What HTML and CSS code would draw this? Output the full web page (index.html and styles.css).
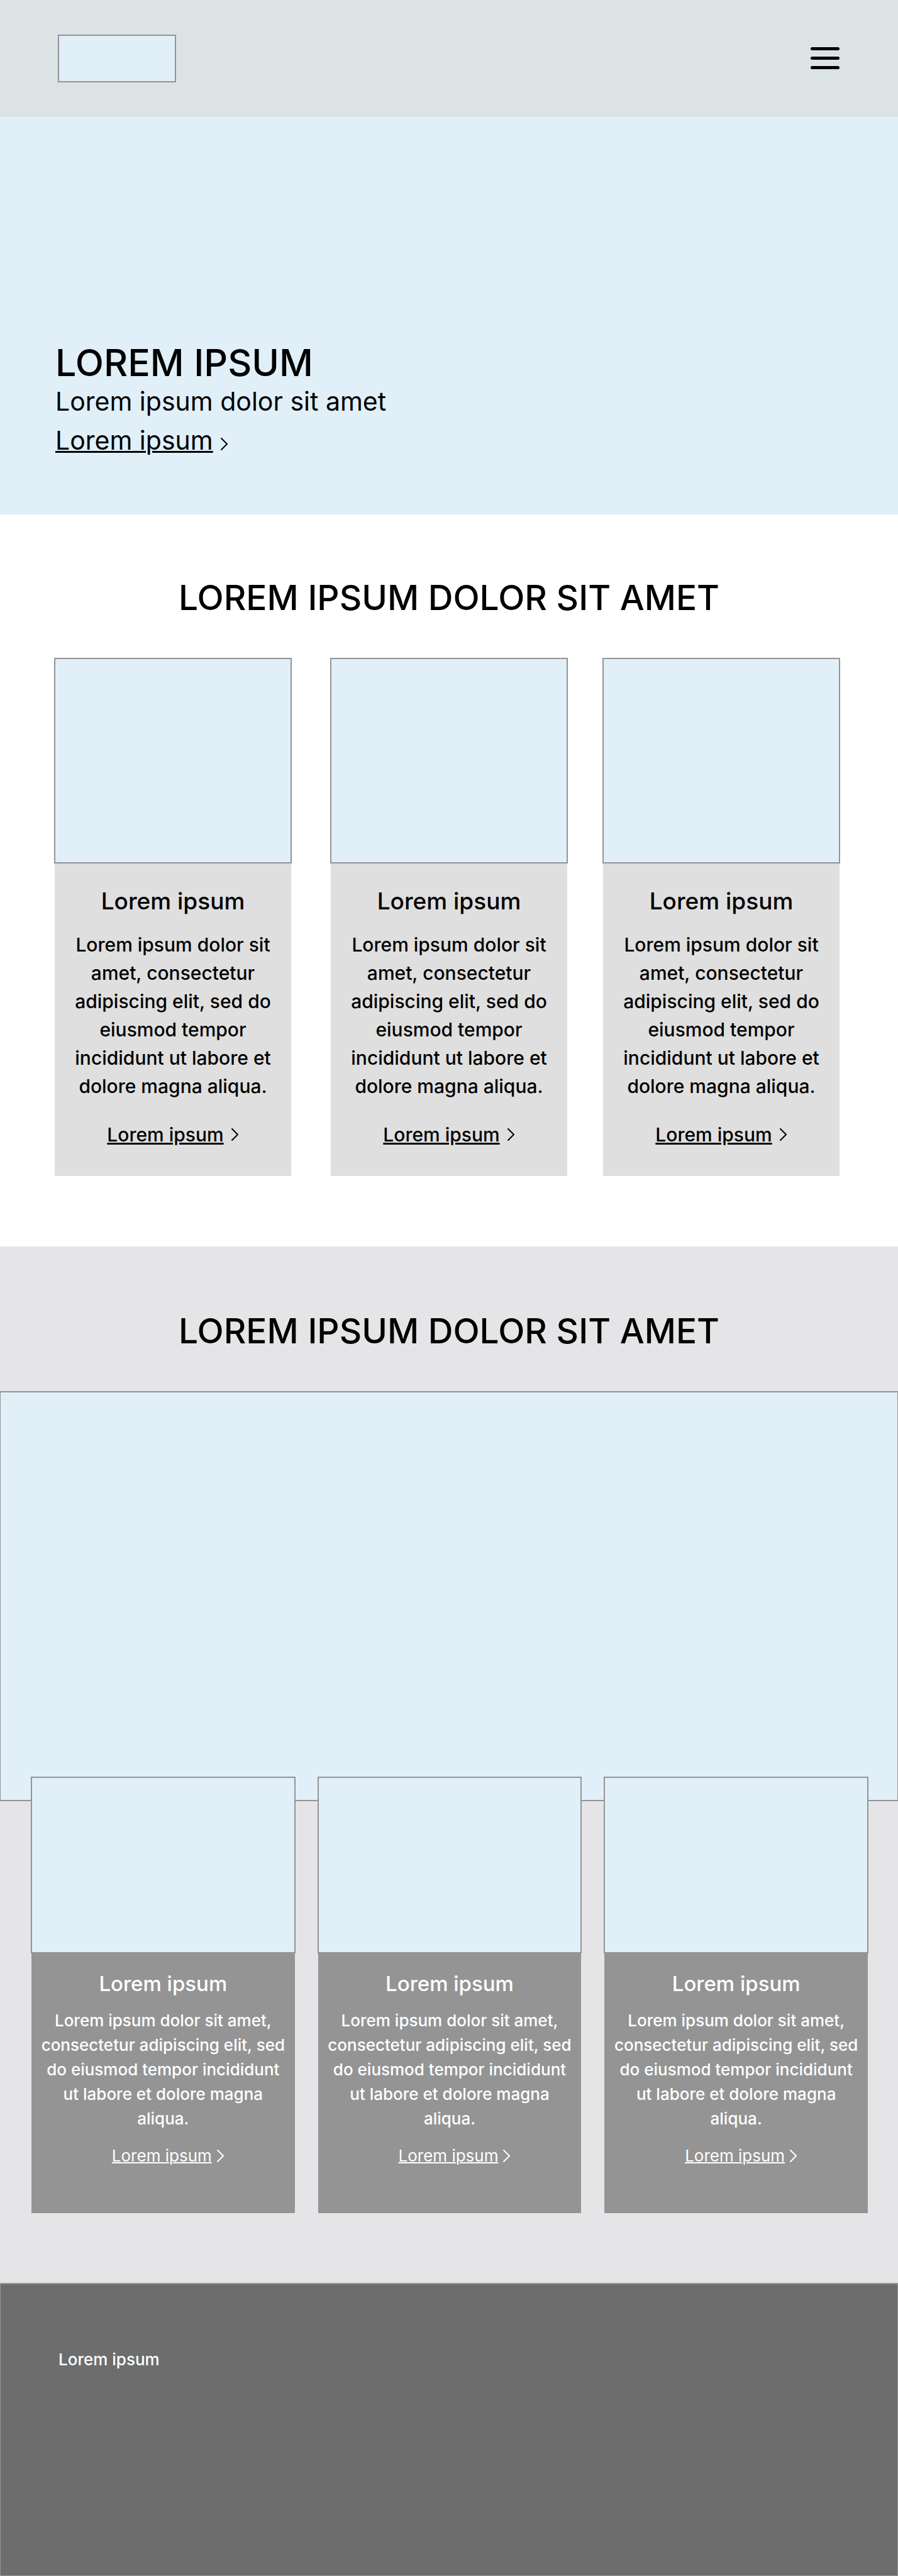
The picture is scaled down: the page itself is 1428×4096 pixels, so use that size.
FILE: index.html
```html
<!DOCTYPE html>
<html lang="en">
<head>
<meta charset="utf-8">
<meta name="viewport" content="width=device-width, initial-scale=1">
<title>Lorem ipsum</title>
<link rel="stylesheet" href="styles.css">
</head>
<body>
<header class="header">
  <a class="logo" href="#" aria-label="Home"></a>
  <button class="menu" type="button" aria-label="Menu">
    <svg width="46" height="36" viewBox="0 0 46 36" fill="none" stroke="currentColor" stroke-width="5" stroke-linecap="round"><path d="M2.500 2.500H43.500M2.500 17.500H43.500M2.500 32.500H43.500"/></svg>
  </button>
</header>

<main>
  <section class="hero">
    <h1 class="hero-title">LOREM IPSUM</h1>
    <p class="hero-text">Lorem ipsum dolor sit amet</p>
    <a class="more more-hero" href="#"><span>Lorem ipsum</span><svg class="chevron" viewBox="0 0 12 20"><path d="M1 1l9 9-9 9"/></svg></a>
  </section>

  <section class="features">
    <h2 class="section-title">LOREM IPSUM DOLOR SIT AMET</h2>
    <div class="feature-grid">
      <article class="card">
        <div class="card-image"></div>
        <h3 class="card-title">Lorem ipsum</h3>
        <p class="card-text">Lorem ipsum dolor sit amet, consectetur adipiscing elit, sed do eiusmod tempor incididunt ut labore et dolore magna aliqua.</p>
        <a class="more" href="#"><span>Lorem ipsum</span><svg class="chevron" viewBox="0 0 12 20"><path d="M1 1l9 9-9 9"/></svg></a>
      </article>
      <article class="card">
        <div class="card-image"></div>
        <h3 class="card-title">Lorem ipsum</h3>
        <p class="card-text">Lorem ipsum dolor sit amet, consectetur adipiscing elit, sed do eiusmod tempor incididunt ut labore et dolore magna aliqua.</p>
        <a class="more" href="#"><span>Lorem ipsum</span><svg class="chevron" viewBox="0 0 12 20"><path d="M1 1l9 9-9 9"/></svg></a>
      </article>
      <article class="card">
        <div class="card-image"></div>
        <h3 class="card-title">Lorem ipsum</h3>
        <p class="card-text">Lorem ipsum dolor sit amet, consectetur adipiscing elit, sed do eiusmod tempor incididunt ut labore et dolore magna aliqua.</p>
        <a class="more" href="#"><span>Lorem ipsum</span><svg class="chevron" viewBox="0 0 12 20"><path d="M1 1l9 9-9 9"/></svg></a>
      </article>
    </div>
  </section>

  <section class="showcase">
    <h2 class="section-title">LOREM IPSUM DOLOR SIT AMET</h2>
    <div class="banner"></div>
    <div class="showcase-grid">
      <article class="card card-dark">
        <div class="card-image"></div>
        <h3 class="card-title">Lorem ipsum</h3>
        <p class="card-text">Lorem ipsum dolor sit amet, consectetur adipiscing elit, sed do eiusmod tempor incididunt ut labore et dolore magna aliqua.</p>
        <a class="more" href="#"><span>Lorem ipsum</span><svg class="chevron" viewBox="0 0 12 20"><path d="M1 1l9 9-9 9"/></svg></a>
      </article>
      <article class="card card-dark">
        <div class="card-image"></div>
        <h3 class="card-title">Lorem ipsum</h3>
        <p class="card-text">Lorem ipsum dolor sit amet, consectetur adipiscing elit, sed do eiusmod tempor incididunt ut labore et dolore magna aliqua.</p>
        <a class="more" href="#"><span>Lorem ipsum</span><svg class="chevron" viewBox="0 0 12 20"><path d="M1 1l9 9-9 9"/></svg></a>
      </article>
      <article class="card card-dark">
        <div class="card-image"></div>
        <h3 class="card-title">Lorem ipsum</h3>
        <p class="card-text">Lorem ipsum dolor sit amet, consectetur adipiscing elit, sed do eiusmod tempor incididunt ut labore et dolore magna aliqua.</p>
        <a class="more" href="#"><span>Lorem ipsum</span><svg class="chevron" viewBox="0 0 12 20"><path d="M1 1l9 9-9 9"/></svg></a>
      </article>
    </div>
  </section>
</main>

<footer class="footer">
  <p class="footer-text">Lorem ipsum</p>
</footer>
</body>
</html>
```

FILE: styles.css
```css
:root {
  --sky: #e1eff8;
  --line: #949494;
}

* {
  box-sizing: border-box;
}

body {
  margin: 0;
  background: #fff;
  color: #000;
  font-family: Inter, "Liberation Sans", sans-serif;
  font-weight: 500;
}

h1, h2, h3, p {
  margin: 0;
  font-weight: 500;
}

.header {
  display: flex;
  align-items: center;
  justify-content: space-between;
  padding: 55px 93px 55px 92px;
  background: #dce3e5;
}

.logo {
  width: 188px;
  height: 76px;
  border: 2px solid var(--line);
  background: var(--sky);
}

.menu {
  display: flex;
  padding: 0;
  border: 0;
  background: none;
  color: #000;
}

.hero {
  display: flex;
  flex-direction: column;
  align-items: flex-start;
  justify-content: flex-end;
  min-height: 632px;
  padding: 0 88px 93px;
  background: var(--sky);
}

.hero-title {
  font-size: 59px;
  line-height: 72px;
}

.hero-text {
  margin-bottom: 12px;
  font-size: 41px;
  font-weight: 400;
  line-height: 50px;
}

.more {
  display: inline-flex;
  align-items: center;
  gap: 12px;
  color: inherit;
  font-size: 30px;
  line-height: 36px;
  text-decoration: none;
}

.more span {
  text-decoration: underline;
  text-decoration-thickness: 3px;
}

.chevron {
  width: 12px;
  height: 20px;
  fill: none;
  stroke: currentColor;
  stroke-width: 2;
  stroke-linecap: round;
  stroke-linejoin: round;
}

.more-hero {
  font-size: 41px;
  font-weight: 400;
  line-height: 50px;
}

.more-hero .chevron {
  margin-top: 12px;
}

.section-title {
  font-size: 55px;
  line-height: 68px;
  text-align: center;
}

.features {
  padding: 98px 0 112px;
}

.section-title {
  margin-bottom: 62px;
}

.feature-grid {
  display: grid;
  grid-template-columns: 1fr 63px 1fr 57px 1fr;
  padding: 0 93px 0 87px;
}

.card {
  display: flex;
  flex-direction: column;
  align-items: center;
  padding: 0 24px 48px;
  background: #dfdfdf;
  text-align: center;
}

.feature-grid .card:nth-child(2) {
  grid-column: 3;
}

.feature-grid .card:nth-child(3) {
  grid-column: 5;
}

.card-image {
  align-self: stretch;
  height: 327px;
  margin: 0 -25px 38px;
  border: 2px solid var(--line);
  background: var(--sky);
}

.card-title {
  margin-bottom: 25px;
  font-size: 37px;
  line-height: 44px;
}

.card-text {
  margin-bottom: 36px;
  font-size: 30px;
  line-height: 45px;
}

.showcase {
  padding: 100px 0 111px;
  background: #e5e5e7;
}

.banner {
  height: 652px;
  border: 2px solid var(--line);
  border-width: 2px 1px;
  background: var(--sky);
}

.showcase-grid {
  display: grid;
  grid-template-columns: repeat(3, 1fr);
  gap: 37px;
  margin-top: -39px;
  padding: 0 48px 0 50px;
}

.card-dark {
  padding: 0 14px 75px;
  background: var(--line);
  color: #fff;
}

.card-dark .card-image {
  height: 281px;
  margin: 0 -15px 28px;
}

.card-dark .card-title {
  margin-bottom: 19px;
  font-size: 33px;
  line-height: 40px;
}

.card-dark .card-text {
  margin-bottom: 24px;
  font-size: 26px;
  line-height: 39px;
}

.card-dark .more {
  gap: 8px;
  padding-left: 16px;
  font-size: 26px;
  font-weight: 400;
  line-height: 32px;
}

.card-dark .more span {
  text-decoration-thickness: 2px;
}

.footer {
  min-height: 466px;
  padding: 104px 92px;
  border: 1px solid #979797;
  border-top-width: 2px;
  background: #6d6d6d;
  color: #fff;
}

.footer-text {
  font-size: 26px;
  line-height: 32px;
}
```
